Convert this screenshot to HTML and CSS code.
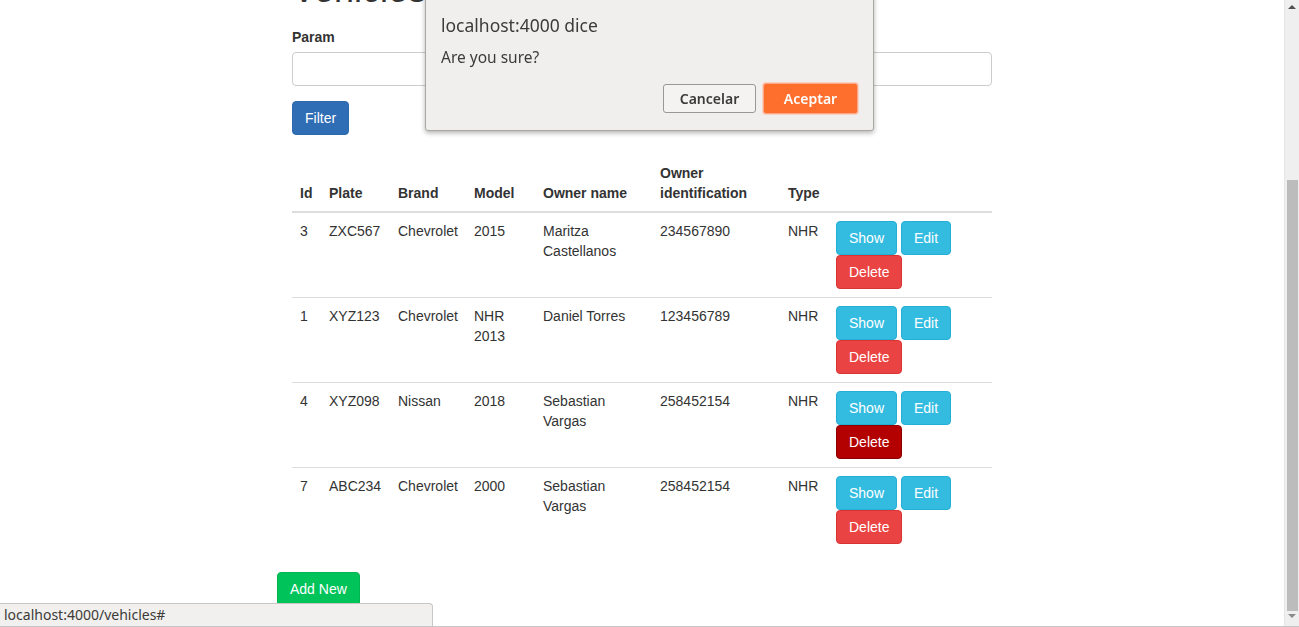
FILE: index.html
```html
<!DOCTYPE html>
<html lang="en">
<head>
<meta charset="utf-8">
<title>Vehicles</title>
<link rel="stylesheet" href="styles.css">
</head>
<body>
<div class="container">
  <div class="content">
    <h1 class="title">Vehicles List</h1>
    <form class="filter-form">
      <div class="form-group">
        <label class="form-label">Param</label>
        <input class="form-control" type="text">
      </div>
      <button type="button" class="btn btn-primary">Filter</button>
    </form>
    <table class="table">
      <thead>
        <tr>
          <th class="c-id">Id</th>
          <th class="c-plate">Plate</th>
          <th class="c-brand">Brand</th>
          <th class="c-model">Model</th>
          <th class="c-owner">Owner name</th>
          <th class="c-ident">Owner identification</th>
          <th class="c-type">Type</th>
          <th class="c-actions"></th>
        </tr>
      </thead>
      <tbody>
        <tr>
          <td>3</td><td>ZXC567</td><td>Chevrolet</td><td>2015</td><td>Maritza Castellanos</td><td>234567890</td><td>NHR</td>
          <td><a class="btn btn-info" href="#">Show</a> <a class="btn btn-info" href="#">Edit</a> <a class="btn btn-danger" href="#">Delete</a></td>
        </tr>
        <tr>
          <td>1</td><td>XYZ123</td><td>Chevrolet</td><td>NHR 2013</td><td>Daniel Torres</td><td>123456789</td><td>NHR</td>
          <td><a class="btn btn-info" href="#">Show</a> <a class="btn btn-info" href="#">Edit</a> <a class="btn btn-danger" href="#">Delete</a></td>
        </tr>
        <tr>
          <td>4</td><td>XYZ098</td><td>Nissan</td><td>2018</td><td>Sebastian Vargas</td><td>258452154</td><td>NHR</td>
          <td><a class="btn btn-info" href="#">Show</a> <a class="btn btn-info" href="#">Edit</a> <a class="btn btn-danger is-hover" href="#">Delete</a></td>
        </tr>
        <tr>
          <td>7</td><td>ABC234</td><td>Chevrolet</td><td>2000</td><td>Sebastian Vargas</td><td>258452154</td><td>NHR</td>
          <td><a class="btn btn-info" href="#">Show</a> <a class="btn btn-info" href="#">Edit</a> <a class="btn btn-danger" href="#">Delete</a></td>
        </tr>
      </tbody>
    </table>
  </div>
  <a class="btn btn-success" href="#">Add New</a>
</div>

<div class="dialog">
  <div class="dialog-title">localhost:4000 dice</div>
  <div class="dialog-msg">Are you sure?</div>
  <div class="dialog-actions">
    <button type="button" class="dbtn dbtn-cancel">Cancelar</button>
    <button type="button" class="dbtn dbtn-ok">Aceptar</button>
  </div>
</div>

<div class="statusbar">localhost:4000/vehicles#</div>

<div class="scrollbar">
  <div class="arrow arrow-up"></div>
  <div class="thumb"></div>
  <div class="arrow arrow-down"></div>
</div>
<div class="bottom-line"></div>
</body>
</html>
```

FILE: styles.css
```css
* { box-sizing: border-box; }
html, body {
  margin: 0;
  padding: 0;
  background: #fff;
  overflow: hidden;
}
body {
  font-family: "Liberation Sans", Arial, sans-serif;
  font-size: 14px;
  line-height: 20px;
  color: #333;
  height: 627px;
}
.container {
  margin-left: 277px;
  width: 730px;
}
.content {
  padding: 0 15px;
}
.title {
  font-size: 36px;
  font-weight: 500;
  line-height: 39.6px;
  margin: -30px 0 17px;
  color: #333;
}
.form-group { margin-bottom: 15px; }
.form-label {
  display: block;
  font-weight: bold;
  margin-bottom: 5px;
}
.form-control {
  display: block;
  width: 100%;
  height: 34px;
  border: 1px solid #ccc;
  border-radius: 4px;
  padding: 6px 12px;
  font: inherit;
  background: #fff;
}
.filter-form { margin-bottom: 20px; }
.btn {
  display: inline-block;
  padding: 6px 12px;
  font-family: inherit;
  font-size: 14px;
  line-height: 20px;
  border: 1px solid transparent;
  border-radius: 4px;
  color: #fff;
  text-decoration: none;
  cursor: pointer;
  vertical-align: middle;
}
.btn-primary { background: #2f6db5; border-color: #2e69ad; }
.btn-info { background: #33bce0; border-color: #23afd6; }
.btn-danger { background: #ea4343; border-color: #d93434; }
.btn-danger.is-hover { background: #b30000; border-color: #8c0000; }
.btn-success { background: #00c35a; border-color: #00b552; }

.table {
  width: 700px;
  table-layout: fixed;
  border-collapse: collapse;
  border-spacing: 0;
  margin-bottom: 20px;
}
.table th, .table td {
  padding: 8px;
  text-align: left;
  line-height: 20px;
}
.table th {
  vertical-align: bottom;
  border-bottom: 2px solid #ddd;
  font-weight: bold;
}
.table td {
  vertical-align: top;
  border-top: 1px solid #ddd;
}
.table tbody tr:first-child td { border-top: 0; }
.c-id { width: 29px; }
.c-plate { width: 69px; }
.c-brand { width: 76px; }
.c-model { width: 69px; }
.c-owner { width: 117px; }
.c-ident { width: 128px; }
.c-type { width: 48px; }
.c-actions { width: 164px; }

.dialog {
  position: fixed;
  left: 425px;
  top: -10px;
  width: 449px;
  height: 141px;
  background: #f0efed;
  border: 1px solid #a9a7a4;
  border-radius: 0 0 3px 3px;
  box-shadow: 0 2px 5px rgba(0,0,0,0.3);
  font-family: "Noto Sans", "Open Sans", sans-serif;
  color: #3c3b37;
  padding: 22px 15px 0;
}
.dialog-title {
  font-size: 17.5px;
  line-height: 24px;
}
.dialog-msg {
  font-size: 15.5px;
  line-height: 20px;
  margin-top: 10px;
}
.dialog-actions {
  display: flex;
  justify-content: flex-end;
  align-items: flex-start;
  gap: 7px;
  margin-top: 16px;
}
.dbtn {
  font-family: "Noto Sans", "Open Sans", sans-serif;
  font-size: 14px;
  font-weight: 600;
  border-radius: 3px;
  padding: 0;
}
.dbtn-cancel {
  width: 93px;
  margin-top: 1px;
  height: 29px;
  background: #f4f3f2;
  border: 1px solid #9a9895;
  color: #3c3b37;
}
.dbtn-ok {
  width: 95px;
  height: 31px;
  background: #fe6e2c;
  border: 1px solid #f9a889;
  box-shadow: 0 0 0 1px #fbd1bf;
  color: #fff;
}

.statusbar {
  position: fixed;
  left: 0;
  bottom: 0;
  width: 433px;
  height: 24px;
  background: #f1f0ef;
  border: 1px solid #c9c7c4;
  border-left: 0;
  border-bottom: 0;
  border-radius: 0 4px 0 0;
  font-family: "Noto Sans", "Open Sans", sans-serif;
  font-size: 14px;
  line-height: 22px;
  padding-left: 4px;
  color: #3c3b37;
}
.scrollbar {
  position: fixed;
  top: 0;
  right: 0;
  width: 15px;
  height: 627px;
  background: #efefef;
  border-left: 1px solid #e6e6e6;
}
.thumb {
  position: absolute;
  left: 2px;
  width: 11px;
  top: 180px;
  height: 431px;
  background: #bcbcbc;
}
.arrow {
  position: absolute;
  left: 3px;
  width: 0;
  height: 0;
  border-left: 4px solid transparent;
  border-right: 4px solid transparent;
}
.arrow-up { top: 5px; border-bottom: 4px solid #505050; }
.arrow-down { top: 614px; border-top: 4px solid #8a8a8a; }
.bottom-line {
  position: fixed;
  left: 0;
  right: 0;
  bottom: 0;
  height: 1px;
  background: #c6c6c6;
}
```
